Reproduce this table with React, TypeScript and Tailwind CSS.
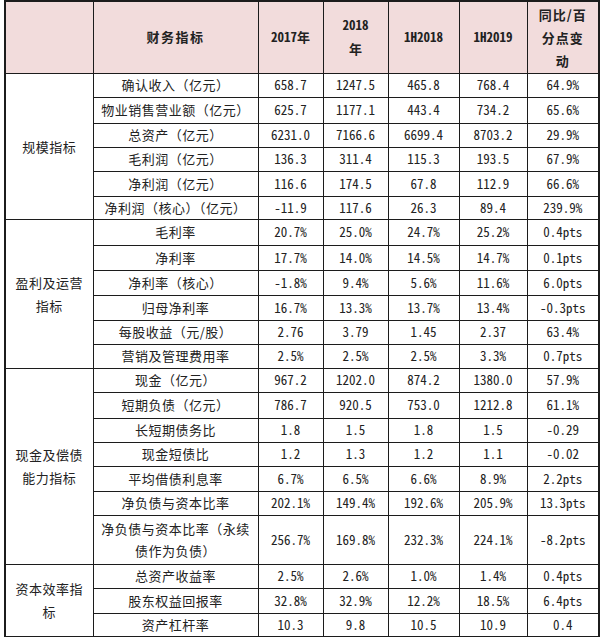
const cn = "font-['Noto_Sans_CJK_SC',sans-serif]";
const num = "font-['Noto_Sans_Mono_CJK_SC','Liberation_Mono',monospace]";

type Row = { label: string; vals: string[]; h: string };

const groups: { name: string[]; rows: Row[] }[] = [
  {
    name: ["规模指标"],
    rows: [
      { label: "确认收入（亿元）", vals: ["658.7", "1247.5", "465.8", "768.4", "64.9%"], h: "h-[24px]" },
      { label: "物业销售营业额（亿元）", vals: ["625.7", "1177.1", "443.4", "734.2", "65.6%"], h: "h-[26px]" },
      { label: "总资产（亿元）", vals: ["6231.0", "7166.6", "6699.4", "8703.2", "29.9%"], h: "h-[24px]" },
      { label: "毛利润（亿元）", vals: ["136.3", "311.4", "115.3", "193.5", "67.9%"], h: "h-[24px]" },
      { label: "净利润（亿元）", vals: ["116.6", "174.5", "67.8", "112.9", "66.6%"], h: "h-[25px]" },
      { label: "净利润（核心）（亿元）", vals: ["-11.9", "117.6", "26.3", "89.4", "239.9%"], h: "h-[23px]" },
    ],
  },
  {
    name: ["盈利及运营", "指标"],
    rows: [
      { label: "毛利率", vals: ["20.7%", "25.0%", "24.7%", "25.2%", "0.4pts"], h: "h-[26px]" },
      { label: "净利率", vals: ["17.7%", "14.0%", "14.5%", "14.7%", "0.1pts"], h: "h-[25px]" },
      { label: "净利率（核心）", vals: ["-1.8%", "9.4%", "5.6%", "11.6%", "6.0pts"], h: "h-[25px]" },
      { label: "归母净利率", vals: ["16.7%", "13.3%", "13.7%", "13.4%", "-0.3pts"], h: "h-[25px]" },
      { label: "每股收益（元/股）", vals: ["2.76", "3.79", "1.45", "2.37", "63.4%"], h: "h-[24px]" },
      { label: "营销及管理费用率", vals: ["2.5%", "2.5%", "2.5%", "3.3%", "0.7pts"], h: "h-[24px]" },
    ],
  },
  {
    name: ["现金及偿债", "能力指标"],
    rows: [
      { label: "现金（亿元）", vals: ["967.2", "1202.0", "874.2", "1380.0", "57.9%"], h: "h-[24px]" },
      { label: "短期负债（亿元）", vals: ["786.7", "920.5", "753.0", "1212.8", "61.1%"], h: "h-[26px]" },
      { label: "长短期债务比", vals: ["1.8", "1.5", "1.8", "1.5", "-0.29"], h: "h-[24px]" },
      { label: "现金短债比", vals: ["1.2", "1.3", "1.2", "1.1", "-0.02"], h: "h-[24px]" },
      { label: "平均借债利息率", vals: ["6.7%", "6.5%", "6.6%", "8.9%", "2.2pts"], h: "h-[25px]" },
      { label: "净负债与资本比率", vals: ["202.1%", "149.4%", "192.6%", "205.9%", "13.3pts"], h: "h-[24px]" },
      { label: "净负债与资本比率（永续债作为负债）", vals: ["256.7%", "169.8%", "232.3%", "224.1%", "-8.2pts"], h: "h-[49px]" },
    ],
  },
  {
    name: ["资本效率指", "标"],
    rows: [
      { label: "总资产收益率", vals: ["2.5%", "2.6%", "1.0%", "1.4%", "0.4pts"], h: "h-[24px]" },
      { label: "股东权益回报率", vals: ["32.8%", "32.9%", "12.2%", "18.5%", "6.4pts"], h: "h-[25px]" },
      { label: "资产杠杆率", vals: ["10.3", "9.8", "10.5", "10.9", "0.4"], h: "h-[23px]" },
    ],
  },
];

const cell = "border border-[#1c1c1c] text-center align-middle p-0";

export default function App() {
  return (
    <div className="w-[600px] h-[637px] bg-white pl-[4px] pt-[0px] text-[#222]">
      <table className="table-fixed border-collapse w-[594px] border-2 border-[#1c1c1c]">
        <colgroup>
          <col className="w-[88px]" />
          <col className="w-[165px]" />
          <col className="w-[65px]" />
          <col className="w-[65px]" />
          <col className="w-[71px]" />
          <col className="w-[68px]" />
          <col className="w-[72px]" />
        </colgroup>
        <thead>
          <tr className="h-[72px] bg-[#f2dcdc] font-bold text-[13px] leading-[24px]">
            <th className={cell}></th>
            <th className={`${cell} ${cn} tracking-[1.5px]`}>财务指标</th>
            <th className={cell}>
              <span className={num}>2017</span>
              <span className={cn}>年</span>
            </th>
            <th className={cell}>
              <span className={num}>2018</span>
              <br />
              <span className={cn}>年</span>
            </th>
            <th className={`${cell} ${num}`}>1H2018</th>
            <th className={`${cell} ${num}`}>1H2019</th>
            <th className={`${cell} ${cn} tracking-[1px] leading-[23px]`}>
              同比/百
              <br />
              分点变
              <br />
              动
            </th>
          </tr>
        </thead>
        <tbody className="text-[13px]">
          {groups.map((g) =>
            g.rows.map((r, i) => (
              <tr key={r.label} className={r.h}>
                {i === 0 && (
                  <td rowSpan={g.rows.length} className={`${cell} ${cn} leading-[23px] tracking-[0.5px]`}>
                    {g.name.map((n) => (
                      <div key={n}>{n}</div>
                    ))}
                  </td>
                )}
                <td className={`${cell} ${cn} leading-[22px] tracking-[0.5px]`}>
                  {r.label.length > 12 ? (
                    <>
                      <div>净负债与资本比率（永续</div>
                      <div>债作为负债）</div>
                    </>
                  ) : (
                    r.label
                  )}
                </td>
                {r.vals.map((v, j) => (
                  <td key={j} className={`${cell} ${num}`}>
                    {v}
                  </td>
                ))}
              </tr>
            ))
          )}
        </tbody>
      </table>
    </div>
  );
}
